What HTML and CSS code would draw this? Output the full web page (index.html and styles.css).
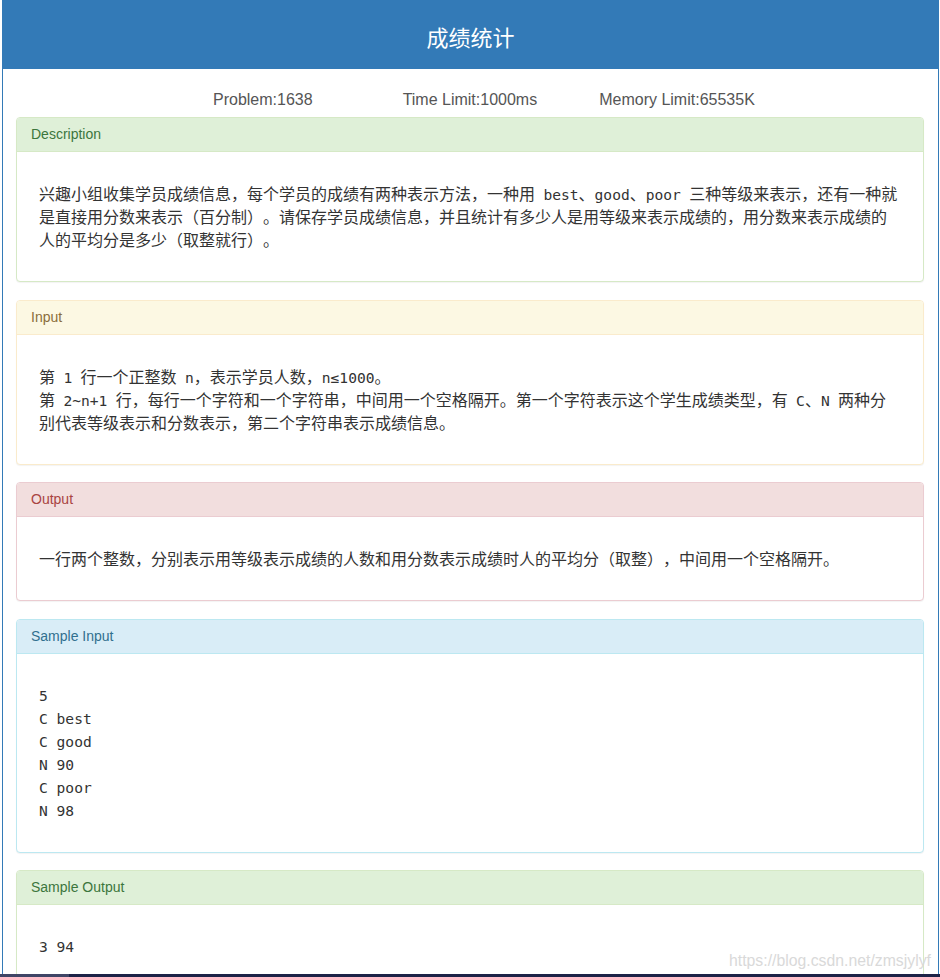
FILE: index.html
```html
<!DOCTYPE html>
<html lang="zh-CN">
<head>
<meta charset="utf-8">
<title>成绩统计</title>
<link rel="stylesheet" href="styles.css">
</head>
<body>
<div class="page">
  <header class="title-bar"><h1 class="title">成绩统计</h1></header>
  <div class="meta">
    <span class="meta-item meta-problem">Problem:1638</span>
    <span class="meta-item meta-time">Time Limit:1000ms</span>
    <span class="meta-item meta-memory">Memory Limit:65535K</span>
  </div>

  <section class="panel panel-success">
    <div class="panel-heading">Description</div>
    <div class="panel-body">
      <p class="text">兴趣小组收集学员成绩信息，每个学员的成绩有两种表示方法，一种用 <code>best</code>、<code>good</code>、<code>poor</code> 三种等级来表示，还有一种就是直接用分数来表示（百分制）。请保存学员成绩信息，并且统计有多少人是用等级来表示成绩的，用分数来表示成绩的人的平均分是多少（取整就行）。</p>
    </div>
  </section>

  <section class="panel panel-warning">
    <div class="panel-heading">Input</div>
    <div class="panel-body">
      <p class="text">第 <code>1</code> 行一个正整数 <code>n</code>，表示学员人数，<code>n≤1000</code>。<br>第 <code>2~n+1</code> 行，每行一个字符和一个字符串，中间用一个空格隔开。第一个字符表示这个学生成绩类型，有 <code>C</code>、<code>N</code> 两种分别代表等级表示和分数表示，第二个字符串表示成绩信息。</p>
    </div>
  </section>

  <section class="panel panel-danger">
    <div class="panel-heading">Output</div>
    <div class="panel-body">
      <p class="text">一行两个整数，分别表示用等级表示成绩的人数和用分数表示成绩时人的平均分（取整），中间用一个空格隔开。</p>
    </div>
  </section>

  <section class="panel panel-info">
    <div class="panel-heading">Sample Input</div>
    <div class="panel-body">
<pre class="sample">5
C best
C good
N 90
C poor
N 98</pre>
    </div>
  </section>

  <section class="panel panel-success">
    <div class="panel-heading">Sample Output</div>
    <div class="panel-body">
<pre class="sample">3 94</pre>
    </div>
  </section>
</div>
<div class="watermark">https://blog.csdn.net/zmsjylyf</div>
<div class="taskbar"><span class="taskbar-left"></span></div>
</body>
</html>
```

FILE: styles.css
```css
html, body {
  margin: 0;
  padding: 0;
  height: 977px;
  overflow: hidden;
  background: #fff;
}

body {
  font-family: "Liberation Sans", Arial, "Noto Sans CJK SC", sans-serif;
  color: #333;
  position: relative;
}

.page {
  margin-left: 2px;
  width: 935px;
  border-left: 1px solid #337ab7;
  border-right: 1px solid #337ab7;
  min-height: 977px;
}

.title-bar {
  background: #337ab7;
  height: 69px;
  box-sizing: border-box;
  padding-top: 19px;
  margin: 0 -1px;
}

.title {
  margin: 0;
  text-align: center;
  color: #fff;
  font-family: "Noto Sans CJK SC", sans-serif;
  font-weight: normal;
  font-size: 22px;
  line-height: 34px;
}

.meta {
  display: flex;
  padding: 21px 0 7px;
  font-size: 16px;
  line-height: 20px;
  color: #555;
}

.meta-problem { margin-left: 210px; }
.meta-time { margin-left: 90px; }
.meta-memory { margin-left: 62px; }

.panel {
  margin: 0 14px 17.5px 13px;
  border: 1px solid transparent;
  border-radius: 4px;
  background: #fff;
  box-shadow: 0 1px 1px rgba(0, 0, 0, 0.05);
}

.panel-heading {
  padding: 7px 14px;
  font-size: 14px;
  line-height: 19px;
  border-bottom: 1px solid transparent;
  border-radius: 3px 3px 0 0;
}

.panel-body {
  padding: 30px 21px 30px 22px;
}

.text {
  margin: 0;
  font-family: "Noto Sans CJK SC", sans-serif;
  font-size: 16px;
  word-spacing: 4.8px;
  line-height: 23px;
  text-spacing-trim: space-all;
  color: #333;
}

.text code {
  font-family: "DejaVu Sans Mono", "Liberation Mono", monospace;
  font-size: 14.6px;
  word-spacing: 0;
  line-height: 1;
  color: #333;
}

.sample {
  margin: 0;
  font-family: "DejaVu Sans Mono", "Liberation Mono", monospace;
  font-size: 14.6px;
  line-height: 23px;
  color: #333;
}

.panel-success { border-color: #d6e9c6; }
.panel-success > .panel-heading { background: #dff0d8; color: #3c763d; border-bottom-color: #d6e9c6; }

.panel-warning { border-color: #faebcc; }
.panel-warning > .panel-heading { background: #fcf8e3; color: #8a6d3b; border-bottom-color: #faebcc; }

.panel-danger { border-color: #ebccd1; }
.panel-danger > .panel-heading { background: #f2dede; color: #a94442; border-bottom-color: #ebccd1; }

.panel-info { border-color: #bce8f1; }
.panel-info > .panel-heading { background: #d9edf7; color: #31708f; border-bottom-color: #bce8f1; }

.watermark {
  position: absolute;
  left: 729px;
  top: 951px;
  font-family: "Liberation Sans", Arial, sans-serif;
  font-size: 15.8px;
  line-height: 20px;
  color: #d9d9d9;
}

.taskbar {
  position: absolute;
  left: 0;
  right: 0;
  top: 974px;
  height: 3px;
  background: #1d2247;
  display: flex;
}

.taskbar-left {
  width: 69px;
  background: #3f4566;
}
```
